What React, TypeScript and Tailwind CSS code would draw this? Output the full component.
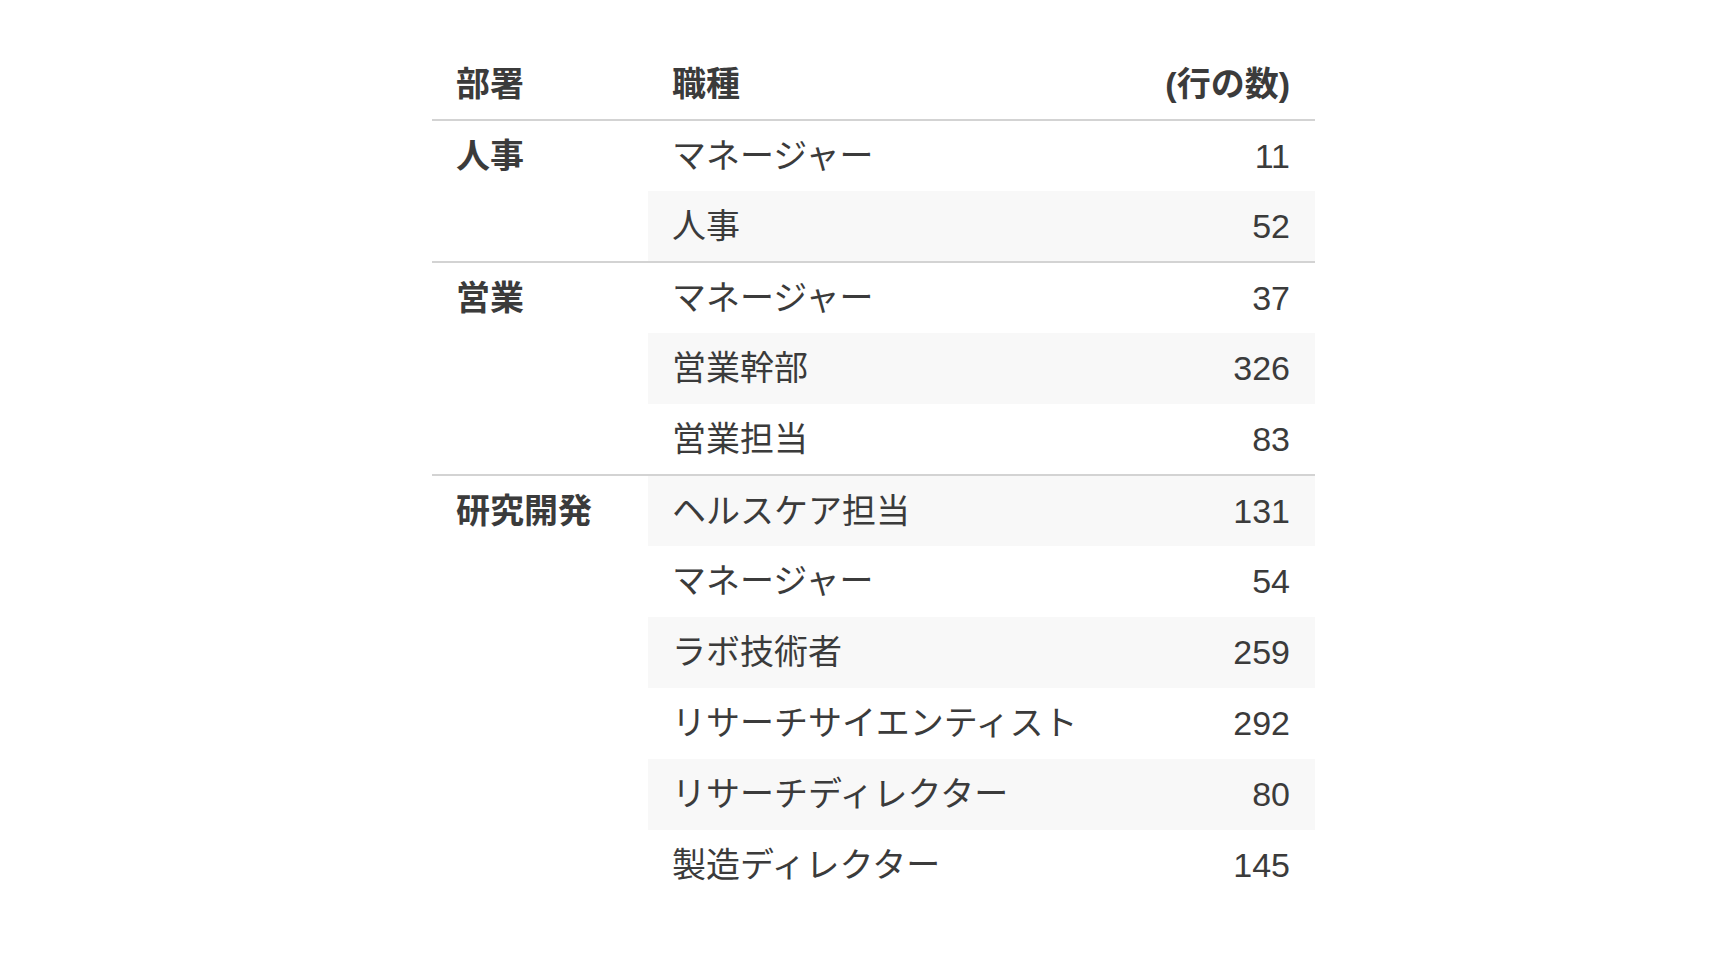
type Row = { job: string; count: number };
type Group = { name: string; rows: Row[] };

const groups: Group[] = [
  {
    name: "人事",
    rows: [
      { job: "マネージャー", count: 11 },
      { job: "人事", count: 52 },
    ],
  },
  {
    name: "営業",
    rows: [
      { job: "マネージャー", count: 37 },
      { job: "営業幹部", count: 326 },
      { job: "営業担当", count: 83 },
    ],
  },
  {
    name: "研究開発",
    rows: [
      { job: "ヘルスケア担当", count: 131 },
      { job: "マネージャー", count: 54 },
      { job: "ラボ技術者", count: 259 },
      { job: "リサーチサイエンティスト", count: 292 },
      { job: "リサーチディレクター", count: 80 },
      { job: "製造ディレクター", count: 145 },
    ],
  },
];

export default function App() {
  let index = 0;
  return (
    <div
      className="min-h-screen bg-white pl-[432px] pt-[50px]"
      style={{ fontFamily: '"Liberation Sans", "Noto Sans CJK JP", sans-serif' }}
    >
      <table className="w-[883px] border-collapse text-[34px] text-[#3b3b3b]">
        <thead>
          <tr className="border-b-2 border-[#d3d3d3]">
            <th className="h-[70px] w-[216px] px-[24px] text-left align-middle font-bold">部署</th>
            <th className="h-[70px] px-[24px] text-left align-middle font-bold">職種</th>
            <th className="h-[70px] px-[25px] text-right align-middle font-bold">(行の数)</th>
          </tr>
        </thead>
        <tbody>
          {groups.map((g, gi) =>
            g.rows.map((r, ri) => {
              index += 1;
              const shaded = index % 2 === 0;
              return (
                <tr
                  key={`${g.name}-${r.job}`}
                  className={ri === 0 && gi > 0 ? "border-t-2 border-[#d3d3d3]" : ""}
                >
                  {ri === 0 && (
                    <td
                      rowSpan={g.rows.length}
                      className="px-[24px] pt-[16px] align-top font-bold leading-[38px]"
                    >
                      {g.name}
                    </td>
                  )}
                  <td className={`h-[71px] px-[24px] align-middle ${shaded ? "bg-[#f8f8f8]" : ""}`}>
                    {r.job}
                  </td>
                  <td className={`h-[71px] px-[25px] text-right align-middle ${shaded ? "bg-[#f8f8f8]" : ""}`}>
                    {r.count}
                  </td>
                </tr>
              );
            })
          )}
        </tbody>
      </table>
    </div>
  );
}
